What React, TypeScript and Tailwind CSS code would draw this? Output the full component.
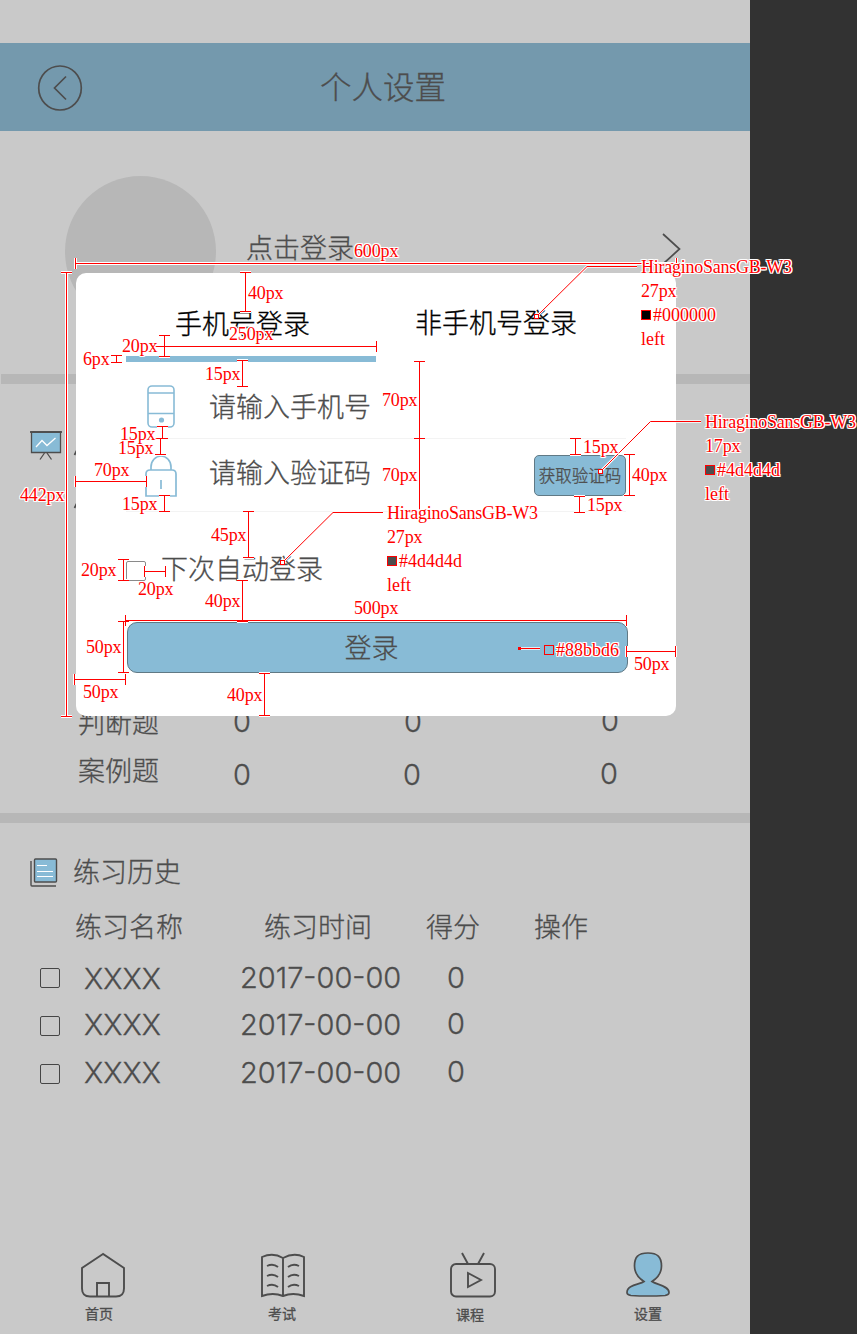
import React from "react";

type Label = { x: number; y: number; text: string };
type Measure = [number, number, number];

const LABELS: Label[] = [
  { x: 354, y: 257, text: "600px" },
  { x: 248, y: 299, text: "40px" },
  { x: 229, y: 340, text: "250px" },
  { x: 122, y: 352, text: "20px" },
  { x: 83, y: 365, text: "6px" },
  { x: 205, y: 380, text: "15px" },
  { x: 641, y: 273, text: "HiraginoSansGB-W3" },
  { x: 641, y: 297, text: "27px" },
  { x: 653, y: 321, text: "#000000" },
  { x: 641, y: 345, text: "left" },
  { x: 382, y: 406, text: "70px" },
  { x: 120, y: 440, text: "15px" },
  { x: 118, y: 454, text: "15px" },
  { x: 94, y: 476, text: "70px" },
  { x: 20, y: 501, text: "442px" },
  { x: 122, y: 510, text: "15px" },
  { x: 211, y: 541, text: "45px" },
  { x: 81, y: 576, text: "20px" },
  { x: 138, y: 595, text: "20px" },
  { x: 205, y: 607, text: "40px" },
  { x: 354, y: 614, text: "500px" },
  { x: 86, y: 653, text: "50px" },
  { x: 83, y: 698, text: "50px" },
  { x: 227, y: 701, text: "40px" },
  { x: 634, y: 670, text: "50px" },
  { x: 556, y: 656, text: "#88bbd6" },
  { x: 583, y: 453, text: "15px" },
  { x: 632, y: 481, text: "40px" },
  { x: 587, y: 511, text: "15px" },
  { x: 382, y: 481, text: "70px" },
  { x: 387, y: 519, text: "HiraginoSansGB-W3" },
  { x: 387, y: 543, text: "27px" },
  { x: 399, y: 567, text: "#4d4d4d" },
  { x: 387, y: 591, text: "left" },
  { x: 705, y: 428, text: "HiraginoSansGB-W3" },
  { x: 705, y: 452, text: "17px" },
  { x: 717, y: 476, text: "#4d4d4d" },
  { x: 705, y: 500, text: "left" },
];

// [x, top, bottom]
const VERTICAL: Measure[] = [
  [66, 272, 716],
  [245, 272, 311],
  [164, 335, 356],
  [116, 355, 362],
  [242, 360, 386],
  [162, 426, 438],
  [160, 438, 454],
  [164, 495, 511],
  [248, 511, 557],
  [419, 361, 438],
  [419, 438, 511],
  [575, 438, 454],
  [629, 454, 495],
  [579, 496, 512],
  [123, 559, 580],
  [242, 580, 621],
  [123, 621, 672],
  [264, 673, 715],
];

// [y, left, right]
const HORIZONTAL: Measure[] = [
  [263, 75, 676],
  [481, 75, 146],
  [571, 144, 165],
  [620, 125, 626],
  [679, 74, 125],
  [651, 626, 675],
];

const measurePath = [
  ...VERTICAL.map(
    ([x, a, b]) =>
      `M${x + 0.5} ${a}V${b + 1}M${x - 5} ${a + 0.5}h11M${x - 5} ${b + 0.5}h11`
  ),
  ...HORIZONTAL.map(
    ([y, a, b]) =>
      `M${a} ${y + 0.5}H${b + 1}M${a + 0.5} ${y - 5}v11M${b + 0.5} ${y - 5}v11`
  ),
  "M155 346.5H377M376.5 341v11",
].join("");

const leaders = [
  "M536.5 316.5L587 266.5H637",
  "M600.5 471.5L650.5 421.5H701",
  "M282.5 562.5L333 512.5H383",
  "M519 648.5H540",
].join("");

const SWATCHES = [
  { x: 641, y: 310, c: "#000" },
  { x: 705, y: 465, c: "#4d4d4d" },
  { x: 387, y: 556, c: "#4d4d4d" },
  { x: 544, y: 645, c: "#88bbd6" },
];

const HISTORY = [
  { name: "XXXX", date: "2017-00-00", score: "0" },
  { name: "XXXX", date: "2017-00-00", score: "0" },
  { name: "XXXX", date: "2017-00-00", score: "0" },
];

function Annotations() {
  return (
    <div className="pointer-events-none absolute inset-0 [-webkit-text-stroke-width:0px]">
      <svg width="857" height="1334" className="absolute inset-0" fill="none">
        <path d={measurePath} stroke="#fff" strokeWidth="3" />
        <path d={leaders} stroke="#fff" strokeWidth="2.6" />
        <path d={measurePath} stroke="#f00" />
        <path d={leaders} stroke="#f00" />
        {[[536, 316], [600, 471], [282, 562]].map(([x, y]) => (
          <rect key={x} x={x - 1.5} y={y - 1.5} width="4" height="4" fill="#fff" stroke="#f00" />
        ))}
        <rect x="518.5" y="647.5" width="2" height="2" stroke="#f00" />
        {SWATCHES.map((s) => (
          <rect key={s.x} x={s.x + 0.5} y={s.y + 0.5} width="9" height="9" fill={s.c} stroke="#f00" />
        ))}
      </svg>
      {LABELS.map((l, i) => (
        <span
          key={i}
          style={{ left: l.x, top: l.y - 15 }}
          className={
            "absolute whitespace-nowrap font-['Liberation_Serif',serif] text-[18px] leading-[18px] font-normal text-[#f00] [text-shadow:1px_0_#fff,-1px_0_#fff,0_1px_#fff,0_-1px_#fff,1px_1px_#fff,-1px_-1px_#fff,1px_-1px_#fff,-1px_1px_#fff] " +
            (l.text.startsWith("H") ? "tracking-[-0.25px]" : l.text.endsWith("px") ? "tracking-[-0.15px]" : "")
          }
        >
          {l.text}
        </span>
      ))}
    </div>
  );
}

function LoginDialog() {
  return (
    <div className="absolute left-[76px] top-[273px] flex h-[443px] w-[600px] flex-col rounded-[10px] bg-white px-[50px]">
      <div className="flex h-[89px] text-[27px] leading-[27px] text-black">
        <div className="flex h-full w-[250px] flex-col justify-between pt-[36px]">
          <span className="pl-[49px]">手机号登录</span>
          <div className="h-[6px] bg-[#88bbd6]" />
        </div>
        <div className="pl-[39px] pt-[35px]">非手机号登录</div>
      </div>
      <div className="flex h-[77px] items-center border-b border-[#f3f3f3]">
        <svg width="30" height="44" viewBox="0 0 30 44" fill="none" stroke="#88bbd6" strokeWidth="1.6" className="ml-5 mt-[12px]">
          <rect x="2" y="2" width="26" height="41" rx="4" />
          <path d="M2 9h26M2 29.5h26" />
          <circle cx="15.5" cy="36" r="2.6" fill="#88bbd6" stroke="none" />
        </svg>
        <span className="ml-[33px] mt-[10px] text-[27px] leading-[27px]">请输入手机号</span>
      </div>
      <div className="flex h-[73px] items-center border-b border-[#f3f3f3]">
        <svg width="34" height="44" viewBox="0 0 34 44" fill="none" stroke="#88bbd6" strokeWidth="1.7" className="ml-[18px] mt-px">
          <path d="M7 16v-3a10 11 0 0 1 20 0v3M2 42V20q0-4 4-4h22q4 0 4 4v22zM17 26v9" />
        </svg>
        <span className="ml-[31px] -mt-[7px] text-[27px] leading-[27px]">请输入验证码</span>
        <button className="ml-auto mr-0 h-[41px] w-[92px] rounded-[5px] border border-[#607985] bg-[#88bbd6] text-[16.5px] leading-none whitespace-nowrap mt-px">
          获取验证码
        </button>
      </div>
      <div className="mt-[43px] flex h-[28px] items-center">
        <div className="mt-[3px] size-[20px] rounded-[2px] border border-[#8a8a8a]" />
        <span className="ml-[15px] -mt-[3px] text-[27px] leading-[27px]">下次自动登录</span>
      </div>
      <button className="ml-px mt-[39px] h-[51px] w-[501px] rounded-[10px] border border-[#607985] bg-[#88bbd6] pb-[3px] pr-[12px] text-[27px] leading-[27px]">
        登录
      </button>
    </div>
  );
}

function TabItem({ label, className, children }: { label: string; className: string; children: React.ReactNode }) {
  return (
    <div className={"flex flex-col " + className}>
      {children}
      <span className="text-[14px] leading-[14px] font-normal">{label}</span>
    </div>
  );
}

export default function App() {
  return (
    <div className="relative h-[1334px] w-[857px] overflow-hidden bg-[#323232] font-['Noto_Sans_CJK_SC',sans-serif] font-light text-[#4d4d4d] [-webkit-text-stroke-width:0.3px]">
      <div className="flex h-full w-[750px] flex-col bg-[#c9c9c9] pt-[43px]">
        <header className="flex h-[88px] shrink-0 items-center bg-[#7499ad] pl-[37px]">
          <svg width="46" height="46" viewBox="0 0 46 46" fill="none" stroke="#4d4d4d" strokeWidth="1.7" className="mt-[2px]">
            <ellipse cx="23" cy="23" rx="21.3" ry="22" />
            <path d="M29 11.500L17.500 23L29 34.500" />
          </svg>
          <h1 className="ml-[237px] -mt-[4px] text-[31.5px] leading-[32px]">个人设置</h1>
        </header>

        <section className="flex h-[243px] shrink-0 pl-[65px] pt-[45px]">
          <div className="size-[151px] rounded-full bg-[#b7b7b7]" />
          <span className="ml-[30px] mt-[57px] text-[27px] leading-[27px]">点击登录</span>
          <svg width="22" height="34" viewBox="0 0 22 34" fill="none" stroke="#4d4d4d" strokeWidth="1.7" className="ml-[307px] mt-[57px]">
            <path d="M2 1L18.500 16L2 31" />
          </svg>
        </section>
        <div className="ml-px h-[10px] shrink-0 bg-[#b7b7b7]" />

        <section className="flex h-[429px] shrink-0 flex-col pt-[45px]">
          <svg width="50" height="82" viewBox="0 0 50 82" fill="none" stroke="#4d4d4d" strokeWidth="1.3" className="ml-[30px] shrink-0">
            <path d="M1.500 3v20.500h29V3z" fill="#88bbd6" />
            <path d="M0 3h32" strokeWidth="1.8" />
            <path d="M6 18l6-6.500 5 5L25.500 9" stroke="#fff" />
            <path d="M14.500 24l-4.500 6.500M17 24l4.500 6.500" />
            <path d="M44.500 26l3-6M44.500 79l3-6" strokeWidth="1.7" />
          </svg>
          <div className="mt-[197px] flex flex-col gap-[21px] pl-[78px] text-[27px] leading-[27px]">
            {["判断题", "案例题"].map((name, i) => (
              <div key={name} className="flex h-[27px] shrink-0">
                <span className="w-[155px]">{name}</span>
                <span className={"w-[170px] font-['Inter'] text-[29px] " + (i ? "pt-[5px]" : "pt-0")}>0</span>
                <span className={"w-[197px] font-['Inter'] text-[29px] " + (i ? "pt-[5px]" : "pt-0 pl-px")}>0</span>
                <span className={"font-['Inter'] text-[29px] " + (i ? "pt-[4px]" : "-mt-px pl-px")}>0</span>
              </div>
            ))}
          </div>
        </section>
        <div className="h-[10px] shrink-0 bg-[#b7b7b7]" />

        <section className="flex h-[425px] shrink-0 flex-col pt-[35px]">
          <div className="flex h-[29px] pl-[30px]">
            <svg width="28" height="29" viewBox="0 0 28 29" fill="none" stroke="#4d4d4d" strokeWidth="1.4">
              <path d="M1 3v24q0 1 1 1h24" />
              <rect x="4.500" y="1" width="22" height="23" rx="1" fill="#88bbd6" />
              <path d="M7 7.500h10M7 13.500h16M7 18.500h16" stroke="#fff" strokeWidth="1.2" />
            </svg>
            <h2 className="-mt-px ml-[15px] text-[27px] leading-[27px]">练习历史</h2>
          </div>
          <div className="mt-[25px] flex h-[27px] pl-[75px] text-[27px] leading-[27px]">
            <span className="w-[189px]">练习名称</span>
            <span className="w-[162px]">练习时间</span>
            <span className="w-[108px]">得分</span>
            <span>操作</span>
          </div>
          <div className="mt-[23px] flex flex-col font-['Inter'] text-[29px] leading-[29px]">
            {HISTORY.map((row, i) => (
              <div key={i} className="flex h-[48px] pl-[40px] pt-[5px]">
                <div className="mt-px size-[20px] rounded-[2px] border-[1.5px] border-[#454545]" />
                <span className={"ml-[24px] w-[156px] tracking-[0.1px] " + (i ? "-mt-[5px]" : "-mt-[3px]")}>{row.name}</span>
                <span className={"w-[207px] tracking-normal " + (i ? "-mt-[5px]" : "-mt-[4px]")}>{row.date}</span>
                <span className={i ? "-mt-[6px]" : "-mt-[4px]"}>{row.score}</span>
              </div>
            ))}
          </div>
        </section>

        <nav className="flex grow text-[#4d4d4d]">
          <TabItem label="首页" className="ml-[80px] w-[180px] pl-[5px]">
            <svg width="46" height="46" viewBox="0 -10 46 46" fill="none" stroke="#4d4d4d" strokeWidth="1.9" className="-ml-[5px] mt-[4px] mb-[8px]">
              <path d="M23 -7.500L2 6.500V27q0 8 8 8h26q8 0 8-8V6.500z M17 35V21.500h12V35" transform="translate(0 -0.500)" />
            </svg>
          </TabItem>
          <TabItem label="考试" className="w-[189px] pl-[8px]">
            <svg width="46" height="46" viewBox="0 -10 46 46" fill="none" stroke="#4d4d4d" strokeWidth="1.9" className="-ml-[8px] mt-[5px] mb-[7px]">
              <path d="M2-6q11-5 21 1q11-6 21-1v39q-11-4-21 0q-10-4-21 0zM23-5v38" />
              <path d="M7 3q6-3 11 1M7 13q6-3 11 1M7 23q6-3 11 1M28 4q5-4 11-1M28 14q5-4 11-1M28 24q5-4 11-1" />
            </svg>
          </TabItem>
          <TabItem label="课程" className="w-[176px] pl-[7px]">
            <svg width="48" height="46" viewBox="0 -10 48 46" fill="none" stroke="#4d4d4d" strokeWidth="1.9" className="-ml-[7px] mt-[4px] mb-[9px]">
              <rect x="2" y="2" width="44" height="32.5" rx="5" />
              <path d="M13-9l6 11M35-9l-6 11M19 11v14l13-7z" />
            </svg>
          </TabItem>
          <TabItem label="设置" className="pl-[9px]">
            <svg width="46" height="46" viewBox="0 -10 46 46" fill="#88bbd6" stroke="#4d4d4d" strokeWidth="1.700" className="-ml-[9px] mt-[4px] mb-[8px]">
              <path d="M23-9c-10 0-13.500 4-13.500 13 0 7 4 12 9.500 15.500-4 3-17 3-17 11 0 2 1 2.500 4 3q17 1 34 0c3-.5 4-1 4-3 0-7-13-8-17-11 5.500-3.500 9.500-8.500 9.500-15.500 0-9-4-13-13.500-13z" />
            </svg>
          </TabItem>
        </nav>
      </div>
      <LoginDialog />
      <Annotations />
    </div>
  );
}
